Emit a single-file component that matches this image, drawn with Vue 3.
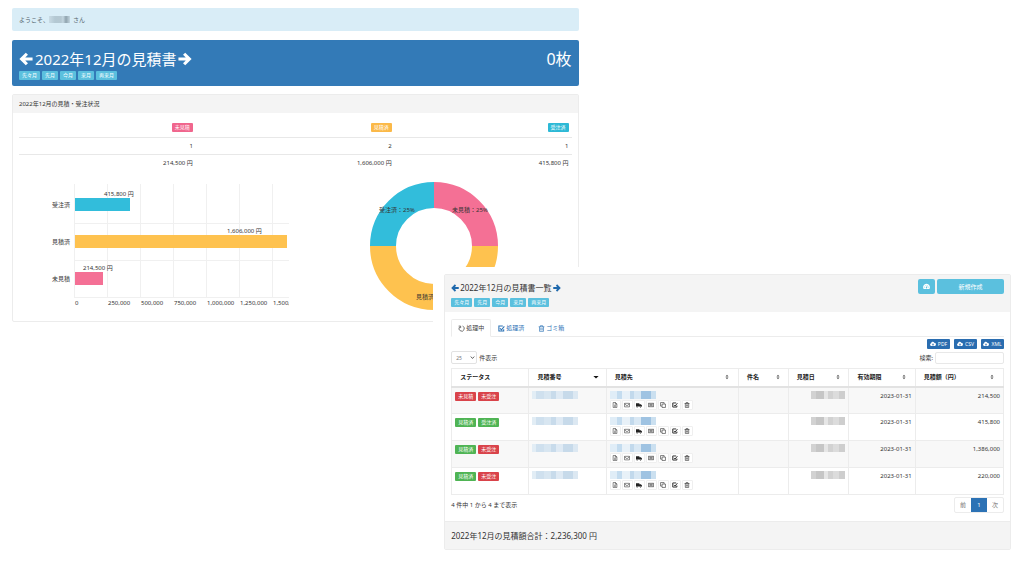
<script setup>
import { h } from 'vue'

const months = ['先々月', '先月', '今月', '来月', '再来月']

const glyphs = {
  left: { line: 'M9 2 3 8l6 6M3.500 8H15.500', w: 3.6 },
  right: { line: 'M7 2l6 6-6 6M12.500 8H.5', w: 3.6 },
  spin: { line: 'M10.500 2.500A6 6 0 1 1 3.500 4.500M1.500 2.500h4.500V7', w: 1.7 },
  check: { line: 'M13 9.500v4h-11v-11h9M4.500 7.500 8 11l6.500-8', w: 2.4 },
  trash: { line: 'M1.500 4h13M5.500 4V1.500h5V4M3.500 4v10.500h9V4M6.500 6.500V12M9.500 6.500V12', w: 1.5 },
  file: { line: 'M3 1.500h6.500L13 5v9.500H3zM9 1.500V5.500h4M5.500 8.500h5M5.500 11.500h5', w: 1.4 },
  mail: { line: 'M1.500 3.500h13v9.500h-13zM1.500 5 8 10l6.500-5', w: 1.4 },
  truck: { fill: 'M0 3h9v9H0zM9 6h4l3 3v3H9zM3 10.500a2 2 0 1 0 .1 0zM12 10.500a2 2 0 1 0 .1 0z' },
  money: { line: 'M.8 3.500h14.400v9H.8zM8 6a2 2 0 1 0 .1 0M3.500 5v2M12.500 9v2M3.500 9v2M12.500 5v2', w: 1.6 },
  copy: { line: 'M5.500 5.500h9v9h-9zM5 11H1.500V1.500H11V5', w: 1.5 },
  gauge: { fill: 'M8 2a7.500 7.500 0 0 0-6.500 11.500h13A7.500 7.500 0 0 0 8 2zM9 5l1.500.5-1.300 4a1.600 1.600 0 1 1-1.400-.4zM3 8.500h1.500V10H3zM4.500 5H6v1.500H4.500zM11.500 8.500H13V10h-1.500z' },
  cloud: { fill: 'M4 13.500a4 4 0 0 1-1-7.800A4.500 4.500 0 0 1 11.500 5 4.300 4.300 0 0 1 12.500 13.500zM7 6.500v3H4.800L8 12.500l3.200-3H9v-3z' },
  caret: { line: 'M2.500 5 8 11l5.500-6', w: 2.5 },
  down: { fill: 'M1 5h14L8 12z' },
  sort: { fill: 'M4 6.500 8 2l4 4.500zM4 9.500h8L8 14z' }
}

const Icon = (props) => {
  const g = glyphs[props.name]
  return h('svg', { viewBox: '0 0 16 16', 'aria-hidden': 'true' }, [
    g.line
      ? h('path', { d: g.line, fill: 'none', stroke: 'currentColor', 'stroke-width': g.w })
      : h('path', { d: g.fill, fill: 'currentColor', 'fill-rule': 'evenodd' })
  ])
}
Icon.props = ['name']

const ticks = ['0', '250,000', '500,000', '750,000', '1,000,000', '1,250,000', '1,500,000']
const bars = [
  { name: '受注済', value: '415,800 円', color: '#32bddb', w: 55, label: 29 },
  { name: '見積済', value: '1,606,000 円', color: '#fec24f', w: 212, label: 152 },
  { name: '未見積', value: '214,500 円', color: '#f47095', w: 28, label: 8 }
]

const columns = [
  { name: 'ステータス', cls: 'c-status' },
  { name: '見積番号', cls: 'c-no', icon: 'down' },
  { name: '見積先', cls: 'c-to', icon: 'sort' },
  { name: '件名', cls: 'c-name', icon: 'sort' },
  { name: '見積日', cls: 'c-date', icon: 'sort' },
  { name: '有効期限', cls: 'c-limit', icon: 'sort' },
  { name: '見積額（円）', cls: 'c-sum', icon: 'sort' }
]
const rows = [
  { tags: [['未見積', 'red'], ['未受注', 'red']], sum: '214,500' },
  { tags: [['見積済', 'green'], ['受注済', 'green']], sum: '415,800' },
  { tags: [['見積済', 'green'], ['未受注', 'red']], sum: '1,386,000' },
  { tags: [['見積済', 'green'], ['未受注', 'red']], sum: '220,000' }
]
const actions = [
  ['file', '詳細'], ['mail', 'メール'], ['truck', '納品'], ['money', '請求'],
  ['copy', '複製'], ['check', '完了'], ['trash', '削除']
]
</script>

<template>
  <div class="page">
    <main class="dash">
      <p class="welcome">ようこそ、<span class="mosaic user"></span>さん</p>

      <section class="hero">
        <div>
          <h1><a href="#" aria-label="前月"><Icon name="left" /></a>2022年12月の見積書<a href="#" aria-label="翌月"><Icon name="right" /></a></h1>
          <nav class="months"><a v-for="m in months" :key="m" href="#" class="tag info">{{ m }}</a></nav>
        </div>
        <strong>0枚</strong>
      </section>

      <section class="card">
        <h2>2022年12月の見積・受注状況</h2>
        <div class="inner">
          <table class="summary">
            <thead>
              <tr>
                <th class="s-side"><span class="tag pink">未見積</span></th>
                <th><span class="tag yellow">見積済</span></th>
                <th class="s-side"><span class="tag cyan">受注済</span></th>
              </tr>
            </thead>
            <tbody>
              <tr><td>1</td><td>2</td><td>1</td></tr>
              <tr><td>214,500 円</td><td>1,606,000 円</td><td>415,800 円</td></tr>
            </tbody>
          </table>
          <div class="charts">
            <svg class="bars" viewBox="0 0 270 132" role="img" aria-label="金額">
              <g stroke="#f0f0f0">
                <line v-for="(t, i) in ticks" :key="t" :x1="55.5 + i * 33" :x2="55.5 + i * 33" y1="6" y2="119" />
                <line v-for="i in 3" :key="i" x1="55" x2="270" :y1="8.500 + i * 37" :y2="8.500 + i * 37" />
              </g>
              <g v-for="(b, i) in bars" :key="b.name">
                <rect x="56" :y="20 + i * 37" :width="b.w" height="13" :fill="b.color" />
                <text x="51" :y="29 + i * 37" text-anchor="end">{{ b.name }}</text>
                <text :x="56 + b.label" :y="18 + i * 37">{{ b.value }}</text>
              </g>
              <text v-for="(t, i) in ticks" :key="t" :x="56 + i * 33" y="127">{{ t }}</text>
            </svg>
            <svg class="donut" viewBox="0 0 130 130" role="img" aria-label="件数">
              <g fill="none" stroke-width="26">
                <path d="M65 14A51 51 0 0 1 116 65" stroke="#f47095" />
                <path d="M116 65A51 51 0 0 1 14 65" stroke="#fec24f" />
                <path d="M14 65A51 51 0 0 1 65 14" stroke="#32bddb" />
              </g>
              <text x="83" y="31">未見積：25%</text>
              <text x="10" y="31">受注済：25%</text>
              <text x="47" y="118">見積済：50%</text>
            </svg>
          </div>
        </div>
      </section>
    </main>

    <div class="overlay">
      <section class="card">
        <header class="list-head">
          <div>
            <h2 class="list-title"><a href="#" aria-label="前月"><Icon name="left" /></a>2022年12月の見積書一覧<a href="#" aria-label="翌月"><Icon name="right" /></a></h2>
            <nav class="months"><a v-for="m in months" :key="m" href="#" class="tag info">{{ m }}</a></nav>
          </div>
          <div class="head-btns">
            <button class="btn square" aria-label="ダッシュボード"><Icon name="gauge" /></button>
            <button class="btn create">新規作成</button>
          </div>
        </header>

        <div class="list-body">
          <nav class="tabs">
            <a href="#" class="active"><Icon name="spin" />処理中</a>
            <a href="#"><Icon name="check" />処理済</a>
            <a href="#"><Icon name="trash" />ゴミ箱</a>
          </nav>
          <div class="exports">
            <button v-for="f in ['PDF', 'CSV', 'XML']" :key="f"><Icon name="cloud" />{{ f }}</button>
          </div>
          <div class="tools">
            <label><span class="pick"><select><option>25</option></select><Icon name="caret" /></span>件表示</label>
            <label>検索:<input type="search"></label>
          </div>

          <table class="list">
            <thead>
              <tr>
                <th v-for="c in columns" :key="c.name" :class="c.cls">
                  <div>{{ c.name }}<Icon v-if="c.icon" :name="c.icon" /></div>
                </th>
              </tr>
            </thead>
            <tbody>
              <tr v-for="(r, i) in rows" :key="i">
                <td><div class="status"><span v-for="t in r.tags" :key="t[0]" class="tag" :class="t[1]">{{ t[0] }}</span></div></td>
                <td><span class="mosaic number"></span></td>
                <td>
                  <span class="mosaic client"></span>
                  <div class="acts">
                    <button v-for="a in actions" :key="a[0]" :aria-label="a[1]"><Icon :name="a[0]" /></button>
                  </div>
                </td>
                <td></td>
                <td class="num"><span class="mosaic day"></span></td>
                <td class="num">2023-01-31</td>
                <td class="num">{{ r.sum }}</td>
              </tr>
            </tbody>
          </table>

          <div class="below">
            <span>4 件中 1 から 4 まで表示</span>
            <nav class="pager"><a href="#">前</a><a href="#" class="on">1</a><a href="#">次</a></nav>
          </div>
        </div>
        <footer>2022年12月の見積額合計：2,236,300 円</footer>
      </section>
    </div>
  </div>
</template>

<style>
body { background: #fff; }
</style>

<style scoped>
* { box-sizing: border-box; }
.page {
  position: relative;
  min-height: 100vh;
  font: 6px/10px "Noto Sans", "Noto Sans CJK JP", sans-serif;
  color: #333;
}
a { color: inherit; text-decoration: none; }
h1, h2, p { margin: 0; font-weight: 400; }
button, input, select { font: inherit; margin: 0; padding: 0; color: inherit; }
svg { display: block; flex: none; }
table { border-collapse: collapse; width: 100%; table-layout: fixed; }

.dash { width: 56.5%; padding: 8px 0 0 12px; }
.welcome {
  display: flex; align-items: center; height: 23px; padding: 0 7px;
  background: #d9edf7; color: #55656e; border-radius: 2px;
}
.mosaic { display: block; height: 8px; }
.user {
  width: 21px; height: 7px; margin-right: 3px;
  background: linear-gradient(90deg, #c9dbe5, #b3c8d3 6px, #b5c8d2 12px, #c3d6e0 14px, #8fa3ae 17px, #c3d6e0 21px);
}
.hero {
  display: flex; justify-content: space-between; align-items: flex-start;
  height: 46px; margin-top: 9px; padding: 9px 7px 0;
  background: #337ab7; color: #fff; border-radius: 2px;
}
.hero h1, .hero strong { font-size: 15px; line-height: 20px; font-weight: 400; }
.hero strong { font-size: 16px; }
.hero h1, .list-title { display: flex; align-items: center; }
.hero h1 { gap: 2px; }
.hero h1 svg { width: 14px; height: 14px; }
.months { display: flex; gap: 2px; margin-top: 2px; }
.tag {
  display: inline-block; height: 9px; padding: 0 3px; border-radius: 1px;
  color: #fff; font-size: 5px; line-height: 9px; white-space: nowrap;
}
.info { background: #5bc0de; }
.pink { background: #f0668d; }
.yellow { background: #fbb948; }
.cyan { background: #2db9d6; }
.red { background: #d9434a; }
.green { background: #4fb454; }

.card { border: 1px solid #ececec; border-radius: 2px; background: #fff; }
.dash .card { margin-top: 8px; }
.dash h2 { height: 18px; padding: 0 6px; background: #f4f4f4; font-size: 6px; line-height: 18px; }
.inner { padding: 6px 6px 10px; }
.summary th, .summary td { height: 17px; padding: 0 3px; text-align: right; font-weight: 400; }
.summary th { height: 18px; vertical-align: middle; line-height: 9px; }
.summary tbody tr { border-top: 1px solid #e8e8e8; }
.s-side { width: 32%; }
.charts { display: flex; padding-top: 7px; }
.bars { width: 270px; height: 132px; }
.donut { width: 130px; height: 130px; margin: 3px 0 0 80px; }
.charts text { font-size: 6px; fill: #333; }

.overlay {
  position: absolute; top: 267px; left: 42.3%; right: 0;
  padding: 7px 13px 20px 11px; background: #fff;
}
.list-head {
  display: flex; justify-content: space-between; height: 37px;
  padding: 4px 6px; background: #f4f4f4;
}
.list-title { gap: 1px; margin-top: 3px; font-size: 8px; line-height: 12px; }
.list-title svg { width: 8px; height: 8px; color: #1f69ad; }
.list-head .months { margin-top: 4px; }
.head-btns { display: flex; gap: 2px; }
.btn { height: 15px; border: 0; border-radius: 2px; background: #5bc0de; color: #fff; }
.square { width: 17px; display: grid; place-items: center; }
.square svg { width: 7px; height: 7px; }
.create { width: 67px; }

.list-body { padding: 7px 6px 8px; }
.tabs { display: flex; height: 18px; border-bottom: 1px solid #ececec; }
.tabs a {
  display: flex; align-items: center; gap: 1px; height: 18px; padding: 0 6px;
  color: #2c72b5; border: 1px solid transparent;
}
.tabs a svg { width: 7px; height: 7px; }
.tabs .active { color: #444; border-color: #ececec #ececec #fff; border-radius: 2px 2px 0 0; }
.exports { display: flex; justify-content: flex-end; gap: 4px; margin-top: 2px; }
.exports button {
  display: flex; align-items: center; justify-content: center; gap: 2px;
  width: 23px; height: 10px; border: 0; border-radius: 1px;
  background: #2a6db0; color: #fff; font-size: 5px; line-height: 10px;
}
.exports svg { width: 6px; height: 6px; }
.tools { display: flex; justify-content: space-between; margin-top: 2px; }
.tools label { display: flex; align-items: center; gap: 2px; height: 13px; }
.pick { position: relative; }
.pick select {
  display: block; width: 26px; height: 13px; padding: 0 4px; appearance: none;
  border: 1px solid #e2e2e2; border-radius: 2px; background: #fff; color: #777; font-size: 5px;
}
.pick svg { position: absolute; right: 2px; top: 4px; width: 5px; height: 5px; }
.tools input { width: 69px; height: 12px; border: 1px solid #e8e8e8; border-radius: 2px; }

.list { margin-top: 4px; }
.list th, .list td { border: 1px solid #ececec; }
.list th { height: 18px; padding: 0 8px; border-bottom: 2px solid #e2e2e2; font-weight: 700; text-align: left; color: #222; }
.list th div { display: flex; align-items: center; justify-content: space-between; white-space: nowrap; }
.list th svg { width: 6px; height: 6px; color: #555; }
.list .c-no svg { color: #111; }
.list td { height: 27px; padding: 3px 3px 0; vertical-align: top; }
.list tbody tr:nth-child(odd) { background: #f8f8f8; }
.c-status { width: 14%; }
.c-no { width: 14%; }
.list .c-no, .list .c-name, .list .c-date { padding-right: 7px; }
.c-to { width: 24%; }
.c-name { width: 9%; }
.c-date { width: 11%; }
.c-limit { width: 12%; }
.status { display: flex; gap: 2px; padding-top: 1px; }
.num { text-align: right; }
.number {
  width: 46px;
  background: linear-gradient(90deg, #e2edf5 0 4px, #cfe0ee 4px 12px, #d8e6f1 12px 19px, #c8dbeb 19px 24px, #dfeaf4 24px 31px, #c7daea 31px 41px, #dce8f2 41px);
}
.client {
  width: 46px;
  background: linear-gradient(90deg, #e0edf7 0 7px, #c4dcef 7px 12px, #e8f1f8 12px 20px, #c2d9ec 20px 24px, #d9e8f4 24px 31px, #9fc3e2 31px 41px, #cbe0f0 41px);
}
.day {
  width: 34px; margin-left: auto;
  background: linear-gradient(90deg, #d2d2d2 0 5px, #c6c6c6 5px 13px, #e6e6e6 13px 17px, #d2d2d2 17px 22px, #dcdcdc 22px 28px, #cecece 28px);
}
.acts { display: flex; gap: 1px; margin-top: 1px; }
.acts button {
  display: grid; place-items: center; width: 11px; height: 10px;
  border: 1px solid #efefef; border-radius: 1px; background: #fff; color: #222;
}
.acts svg { width: 6px; height: 6px; }

.below { display: flex; justify-content: space-between; align-items: center; margin-top: 2px; }
.pager { display: flex; border: 1px solid #ececec; border-radius: 2px; }
.pager a { width: 16px; height: 14px; line-height: 14px; text-align: center; color: #777; }
.pager .on { background: #2c72b5; color: #fff; }
footer { height: 28px; padding: 0 6px; background: #f4f4f4; border-top: 1px solid #ececec; font-size: 8px; line-height: 27px; }
</style>
